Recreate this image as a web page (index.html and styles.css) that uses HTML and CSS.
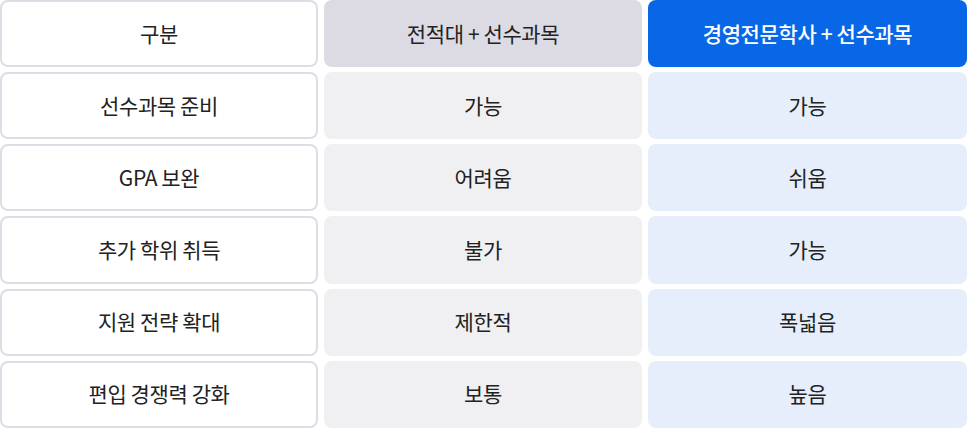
FILE: index.html
```html
<!DOCTYPE html>
<html>
<head>
    <title>편입 비교표</title>
    <link rel="stylesheet" href="styles.css">
</head>
<body>
    <div class="compare">
        <!-- 헤더 -->
        <div class="cell label">구분</div>
        <div class="cell gray head">전적대 + 선수과목</div>
        <div class="cell blue head">경영전문학사 + 선수과목</div>

        <div class="cell label">선수과목 준비</div>
        <div class="cell gray">가능</div>
        <div class="cell blue">가능</div>

        <div class="cell label">GPA 보완</div>
        <div class="cell gray">어려움</div>
        <div class="cell blue">쉬움</div>

        <div class="cell label">추가 학위 취득</div>
        <div class="cell gray">불가</div>
        <div class="cell blue">가능</div>

        <div class="cell label">지원 전략 확대</div>
        <div class="cell gray">제한적</div>
        <div class="cell blue">폭넓음</div>

        <div class="cell label">편입 경쟁력 강화</div>
        <div class="cell gray">보통</div>
        <div class="cell blue">높음</div>
    </div>
</body>
</html>
```

FILE: styles.css
```css
html, body { margin: 0; padding: 0; background: #fff; }
body { font-family: "Noto Sans CJK KR", "Noto Sans", sans-serif; color: #222; }

.compare {
    display: grid;
    grid-template-columns: 318px 318px 319px;
    grid-template-rows: repeat(6, 1fr);
    column-gap: 6px;
    row-gap: 5px;
    width: 967px;
    height: 428px;
}

.cell {
    display: flex;
    align-items: center;
    justify-content: center;
    border-radius: 8px;
    font-size: 21px;
    letter-spacing: -0.4px;
    box-sizing: border-box;
    padding-bottom: 2px;
}

.label { background: #fff; border: 2px solid #dddde5; }
.gray { background: #f0f0f3; }
.gray.head { background: #dcdae3; }
.blue { background: #e5eefa; }
.blue.head { background: #0867e6; color: #fff; font-weight: 500; }
```
